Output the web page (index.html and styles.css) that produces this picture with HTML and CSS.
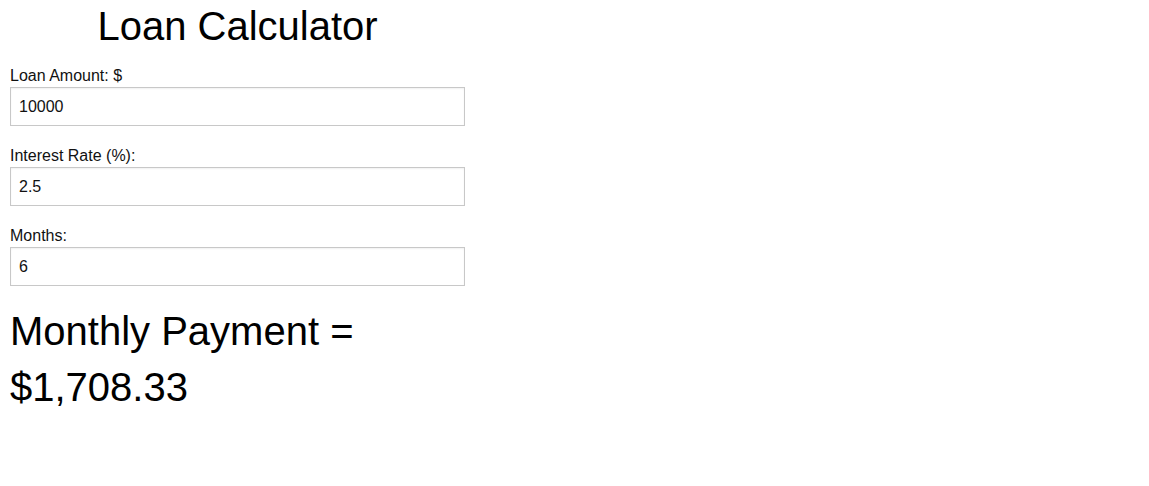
FILE: index.html
```html
<!DOCTYPE html>
<html lang="en">
<head>
<meta charset="utf-8">
<title>Loan Calculator</title>
<link rel="stylesheet" href="styles.css">
</head>
<body>
<main class="calc">
  <h1 class="calc-title">Loan Calculator</h1>
  <form class="calc-form">
    <div class="field">
      <label class="field-label" for="amount">Loan Amount: $</label>
      <input class="field-input" id="amount" type="text" value="10000">
    </div>
    <div class="field">
      <label class="field-label" for="rate">Interest Rate (%):</label>
      <input class="field-input" id="rate" type="text" value="2.5">
    </div>
    <div class="field">
      <label class="field-label" for="months">Months:</label>
      <input class="field-input" id="months" type="text" value="6">
    </div>
  </form>
  <h2 class="calc-result">Monthly Payment = $1,708.33</h2>
</main>
</body>
</html>
```

FILE: styles.css
```css
html, body {
  margin: 0;
  padding: 0;
  background: #ffffff;
}

body {
  font-family: "Liberation Sans", Arial, Helvetica, sans-serif;
  color: #111;
}

.calc {
  width: 455px;
  padding: 3px 10px 0;
}

.calc-title {
  margin: 0 0 18px;
  font-size: 40px;
  line-height: 46px;
  font-weight: normal;
  text-align: center;
  color: #000;
}

.calc-form {
  display: flex;
  flex-direction: column;
  gap: 21px;
  margin: 0;
}

.field {
  display: flex;
  flex-direction: column;
}

.field-label {
  font-size: 16px;
  line-height: 18px;
  margin-bottom: 2px;
}

.field-input {
  box-sizing: border-box;
  width: 455px;
  height: 39px;
  margin: 0;
  padding: 0 8px;
  border: 1px solid #c8c8c8;
  border-radius: 0;
  box-shadow: inset 0 1px 2px rgba(0, 0, 0, 0.06);
  font-family: "Liberation Sans", Arial, Helvetica, sans-serif;
  font-size: 16px;
  color: #111;
  background: #fff;
  outline: none;
}

.calc-result {
  margin: 17px 0 0;
  font-size: 40px;
  line-height: 56px;
  font-weight: normal;
  color: #000;
}
```
